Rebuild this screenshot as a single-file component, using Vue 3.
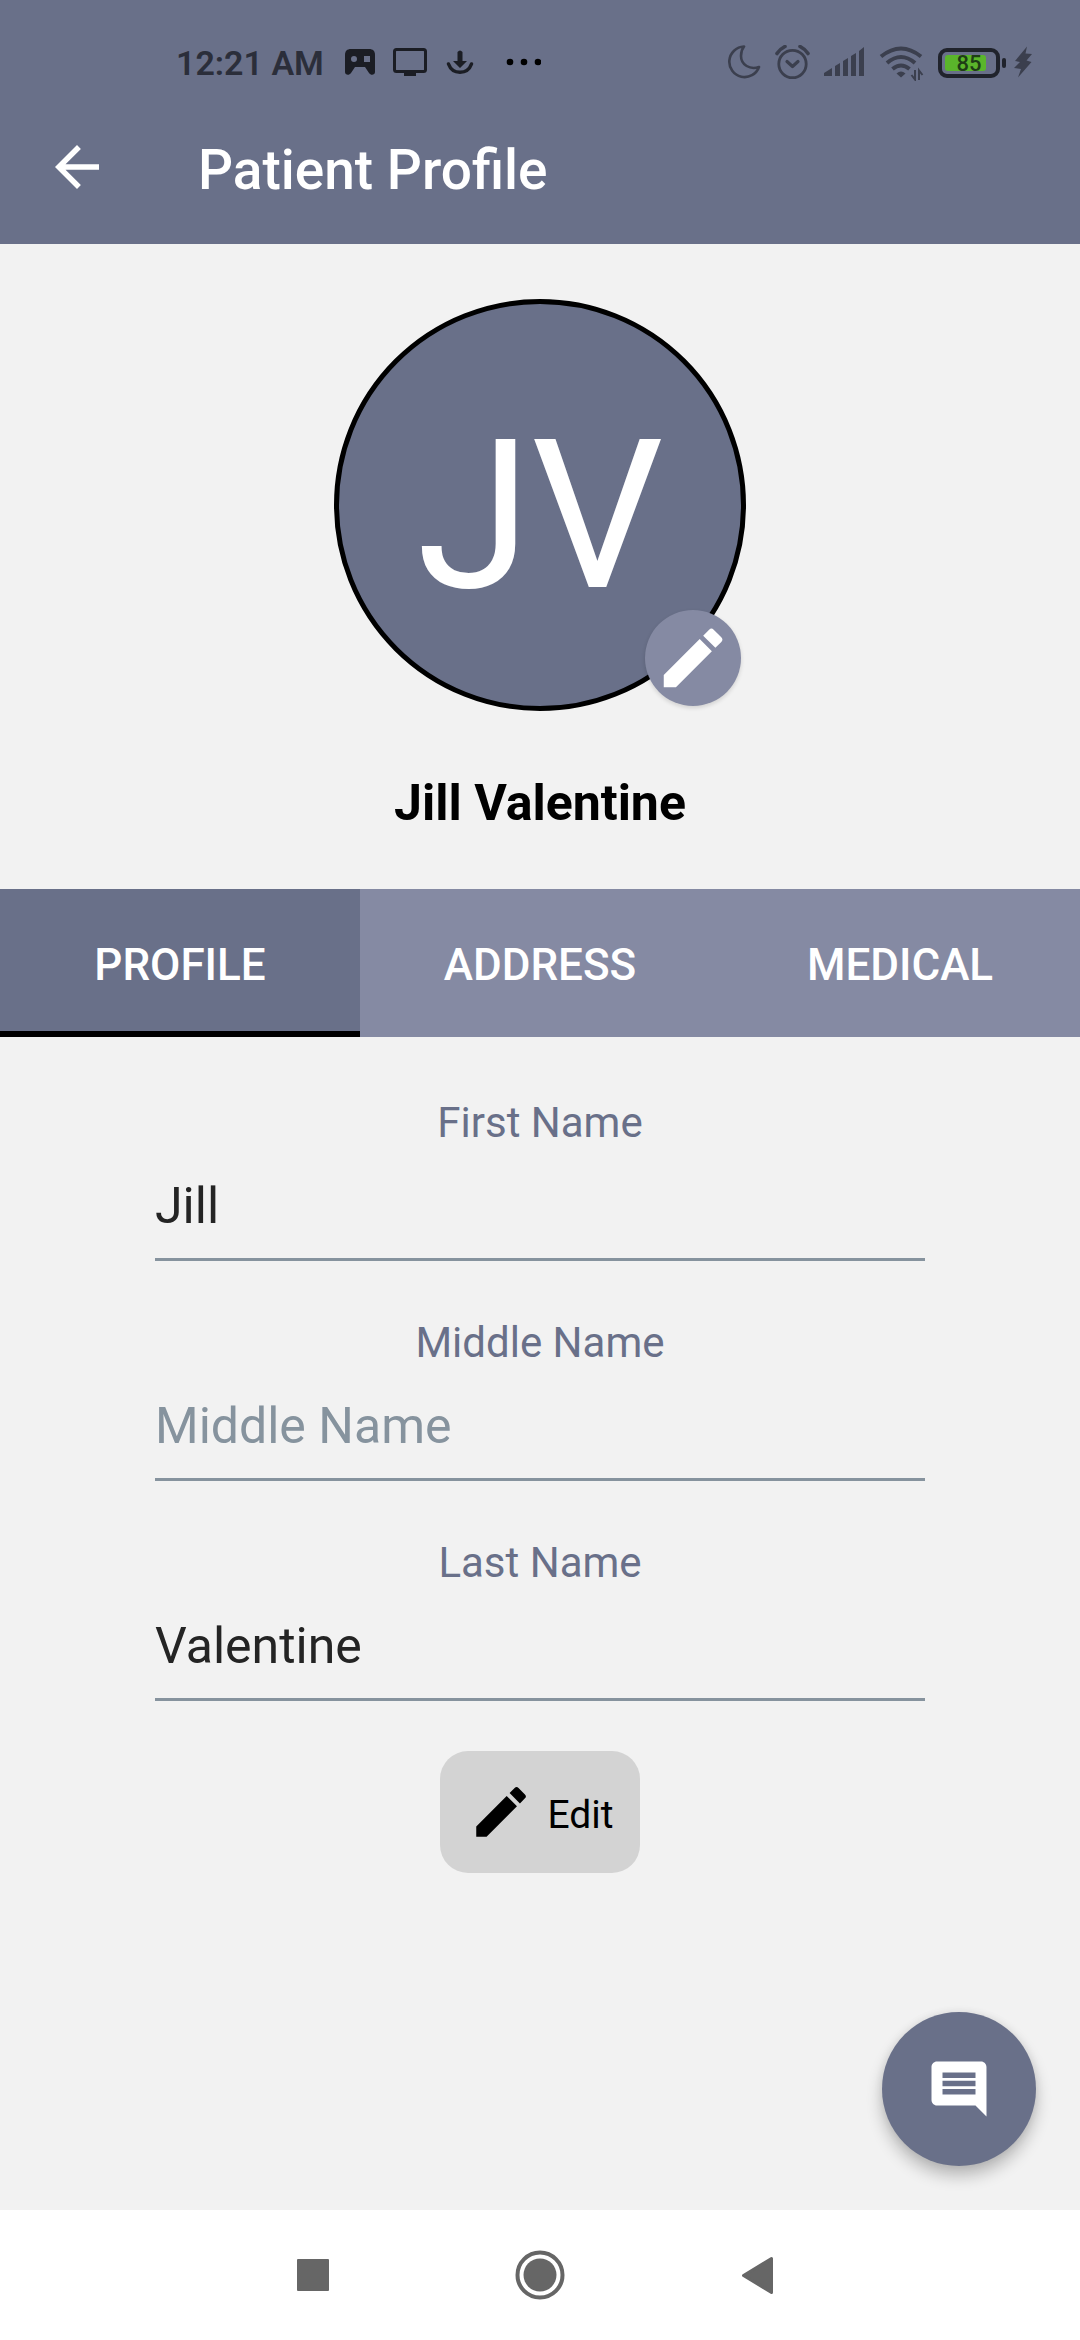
<script setup>
import { ref } from 'vue'

const tabs = ['Profile', 'Address', 'Medical']
const activeTab = ref('Profile')
const battery = 85

const fields = ref([
  { id: 'first-name', label: 'First Name', value: 'Jill' },
  { id: 'middle-name', label: 'Middle Name', value: '' },
  { id: 'last-name', label: 'Last Name', value: 'Valentine' },
])
</script>

<template>
  <div class="screen">
    <header class="top">
      <div class="status">
        <div class="status-left">
          <span class="time">12:21 AM</span>
          <svg width="30" height="36" viewBox="0 0 30 36" fill="#1b1d24">
            <path fill-rule="evenodd" d="M6 4h18c4 0 6 2 6 6v17c0 3-4 4-6 1l-4-6H10l-4 6c-2 3-6 2-6-1V10c0-4 2-6 6-6zM9 11a3 3 0 1 0 0 6a3 3 0 0 0 0-6zM19 11v6h6v-6z" />
          </svg>
          <svg width="34" height="36" viewBox="0 0 34 36">
            <rect x="1.5" y="4.5" width="31" height="22" rx="2" fill="none" stroke="#1b1d24" stroke-width="3" />
            <path d="M11 27h12v4H11z" fill="#1b1d24" />
          </svg>
          <svg width="30" height="36" viewBox="0 0 30 36">
            <path d="M3.500 19c4 11 19 11 23 0" fill="none" stroke="#1b1d24" stroke-width="3.500" stroke-linecap="round" />
            <path d="M12.500 7q2.500-3 5 0v9H22l-7 7-7-7h4.500z" fill="#1b1d24" />
          </svg>
          <svg width="48" height="36" viewBox="0 0 48 36">
            <circle cx="17" cy="17" r="3.300" /><circle cx="31" cy="17" r="3.300" /><circle cx="45" cy="17" r="3.300" />
          </svg>
        </div>
        <div class="status-right">
          <svg width="33" height="36" viewBox="0 0 33 36" fill="none" stroke="#3b3f4e" stroke-width="2.600" stroke-linejoin="round">
            <path d="M16 1.500A15.300 15.300 0 1 0 31 22C22 25 13 20 13 11c0-4 1-7 3-9.500z" />
          </svg>
          <svg width="35" height="36" viewBox="0 0 35 36" fill="none" stroke="#3b3f4e" stroke-width="2.800">
            <circle cx="17.500" cy="19" r="13.700" />
            <path d="M12 16.500l5.500 5 5.500-5" stroke-width="3.200" stroke-linecap="round" stroke-linejoin="round" />
            <path d="M2 8.500Q5 4 10 1.500M33 8.500Q30 4 25 1.500" stroke-width="3.600" stroke-linecap="round" />
          </svg>
          <svg width="40" height="36" viewBox="0 0 40 36" fill="#3b3f4e">
            <path d="M0 31v-3l8-5v8zM11 21l5-3v13h-5zM19 16l5-3v18h-5zM27 11l5-3v23h-5zM35 6l5-4v29h-5z" />
          </svg>
          <svg width="46" height="36" viewBox="0 0 46 36" fill="none" stroke="#3b3f4e" stroke-width="4">
            <path d="M3 11.500Q23-4.500 43 11.500M9 18Q23 6 37 18M14.500 24Q23 17 31.500 24" />
            <path d="M18.500 28.500Q23 24.500 27.500 28.500L23 32.500z" fill="#3b3f4e" stroke="none" />
            <path d="M37 25v9.500l-3.500-4.500M41 35v-9.500l3.500 4.500" stroke-width="2" />
          </svg>
          <div class="power">
            <div class="battery">
              <div class="track">
                <div class="level" :style="{ width: battery + '%' }"></div>
                <span class="percent">{{ battery }}</span>
              </div>
            </div>
            <div class="nub"></div>
            <svg class="bolt" width="18" height="36" viewBox="0 0 18 36" fill="#3b3f4e">
              <path d="M13 1.500L1 16l5 1-6 6 7 1-3 8.500L17.500 17l-5-1.500L18 9l-6.500-.5z" />
            </svg>
          </div>
        </div>
      </div>
      <div class="app-bar">
        <button class="back" type="button" aria-label="Back">
          <svg width="66" height="66" viewBox="0 0 24 24" fill="#fff">
            <path d="M20 11H7.830l5.590-5.590L12 4l-8 8 8 8 1.410-1.410L7.830 13H20z" />
          </svg>
        </button>
        <h1>Patient Profile</h1>
      </div>
    </header>

    <main>
      <section class="hero">
        <div class="avatar">
          <span>JV</span>
          <button class="badge" type="button" aria-label="Change picture">
            <svg width="78" height="78" viewBox="0 0 24 24" fill="#fff">
              <path d="M3 17.250V21h3.750L17.810 9.940l-3.750-3.750zM20.710 7.040a1 1 0 0 0 0-1.410l-2.340-2.340a1 1 0 0 0-1.410 0l-1.830 1.830 3.750 3.750z" />
            </svg>
          </button>
        </div>
        <h2>Jill Valentine</h2>
      </section>

      <nav class="tabs">
        <button
          v-for="tab in tabs"
          :key="tab"
          type="button"
          :class="{ active: tab === activeTab }"
          @click="activeTab = tab"
        >{{ tab }}</button>
      </nav>

      <form class="form" @submit.prevent>
        <div v-for="field in fields" :key="field.id" class="field">
          <label :for="field.id">{{ field.label }}</label>
          <input :id="field.id" v-model="field.value" type="text" :placeholder="field.label" />
        </div>
        <button class="edit" type="submit">
          <svg width="66" height="66" viewBox="0 0 24 24">
            <path d="M3 17.250V21h3.750L17.810 9.940l-3.750-3.750zM20.710 7.040a1 1 0 0 0 0-1.410l-2.340-2.340a1 1 0 0 0-1.410 0l-1.830 1.830 3.750 3.750z" />
          </svg>
          <span>Edit</span>
        </button>
      </form>

      <button class="fab" type="button" aria-label="Messages">
        <svg width="66" height="66" viewBox="0 0 24 24" fill="#fff">
          <path d="M21.990 4c0-1.100-.890-2-1.990-2H4c-1.100 0-2 .9-2 2v12c0 1.100.9 2 2 2h14l4 4zM18 14H6v-2h12zm0-3H6V9h12zm0-3H6V6h12z" />
        </svg>
      </button>
    </main>

    <footer class="system-nav">
      <button type="button" aria-label="Recent apps">
        <svg width="50" height="50" viewBox="0 0 50 50" fill="#666"><rect x="8" y="9" width="32" height="32" rx="1" /></svg>
      </button>
      <button type="button" aria-label="Home">
        <svg width="50" height="50" viewBox="0 0 50 50">
          <circle cx="25" cy="25" r="22.500" fill="none" stroke="#666" stroke-width="4" />
          <circle cx="25" cy="25" r="16.500" fill="#666" />
        </svg>
      </button>
      <button type="button" aria-label="Back">
        <svg width="50" height="50" viewBox="0 0 50 50" fill="#666" stroke="#666" stroke-width="3" stroke-linejoin="round">
          <path d="M2.500 25.500L30.500 8.500v34z" />
        </svg>
      </button>
    </footer>
  </div>
</template>

<style>
body {
  margin: 0;
}
</style>

<style scoped>
.screen {
  display: flex;
  flex-direction: column;
  min-height: 100vh;
  background: #f2f2f2;
  font-family: Roboto, sans-serif;
}

button {
  display: flex;
  align-items: center;
  justify-content: center;
  margin: 0;
  padding: 0;
  border: 0;
  background: none;
  font-family: inherit;
}

svg {
  display: block;
  flex: none;
}

.top {
  background: #697089;
}

.status {
  display: flex;
  justify-content: space-between;
  align-items: center;
  height: 54px;
  padding: 36px 48px 0 176px;
}

.status-left,
.status-right,
.power {
  display: flex;
  align-items: center;
}

.status-left {
  gap: 18px;
}

.status-right {
  gap: 14px;
}

.time {
  min-width: 151px;
  color: #2b2e3a;
  font-size: 34px;
  font-weight: 600;
  line-height: 40px;
}

.battery {
  box-sizing: border-box;
  width: 62px;
  height: 30px;
  padding: 3px;
  border: 4px solid #20232c;
  border-radius: 9px;
}

.track {
  position: relative;
  height: 16px;
}

.level {
  height: 16px;
  border-radius: 3px;
  background: #5ab52b;
}

.percent {
  position: absolute;
  inset: 0;
  color: #1e3d16;
  font-size: 22px;
  font-weight: 500;
  line-height: 18px;
  text-align: center;
}

.nub {
  width: 4px;
  height: 10px;
  margin-left: 2px;
  border-radius: 2px;
  background: #20232c;
}

.bolt {
  margin-left: 8px;
}

.app-bar {
  display: flex;
  align-items: center;
  gap: 88px;
  height: 154px;
  padding: 0 44px;
}

h1 {
  margin: 0;
  padding-top: 6px;
  color: #fff;
  font-size: 55px;
  font-weight: 500;
  line-height: 66px;
}

main {
  position: relative;
  flex: 1;
}

.hero {
  display: flex;
  flex-direction: column;
  align-items: center;
  gap: 62px;
  padding: 55px 0 56px;
}

.avatar {
  position: relative;
  display: flex;
  align-items: center;
  justify-content: center;
  box-sizing: border-box;
  width: 412px;
  height: 412px;
  padding-top: 22px;
  border: 5px solid #000;
  border-radius: 50%;
  background: #697089;
  color: #fff;
  font-size: 208px;
  line-height: 244px;
}

.badge {
  position: absolute;
  right: 0;
  bottom: 0;
  width: 96px;
  height: 96px;
  border-radius: 50%;
  background: #858aa3;
  box-shadow: 0 2px 4px rgba(0, 0, 0, 0.14);
}

h2 {
  margin: 0;
  color: #000;
  font-size: 50px;
  font-weight: 700;
  line-height: 60px;
}

.tabs {
  display: grid;
  grid-template-columns: repeat(3, 1fr);
  background: #858aa3;
}

.tabs button {
  height: 148px;
  padding-top: 4px;
  border-bottom: 0 solid #000;
  color: #fff;
  font-size: 44px;
  font-weight: 500;
  text-transform: uppercase;
}

.tabs .active {
  padding-top: 10px;
  border-bottom-width: 6px;
  background: #697089;
}

.form {
  display: flex;
  flex-direction: column;
  gap: 57px;
  padding: 61px 155px;
}

.field {
  display: flex;
  flex-direction: column;
  gap: 6px;
}

label {
  color: #697089;
  font-size: 42px;
  line-height: 50px;
  text-align: center;
}

input {
  box-sizing: border-box;
  width: 100%;
  height: 107px;
  padding: 0;
  border: 0;
  border-bottom: 3px solid #86939e;
  border-radius: 0;
  outline: 0;
  background: none;
  color: #242424;
  font-family: inherit;
  font-size: 50px;
}

input::placeholder {
  color: #86939e;
  opacity: 1;
}

.edit {
  align-self: center;
  gap: 13px;
  margin-top: -7px;
  padding: 28px 26px 28px 28px;
  border-radius: 28px;
  background: #d3d3d3;
  color: #000;
  font-size: 39px;
}

.edit span {
  padding-top: 6px;
}

.fab {
  position: absolute;
  right: 44px;
  bottom: 44px;
  width: 154px;
  height: 154px;
  border-radius: 50%;
  background: #697089;
  box-shadow: 0 10px 16px rgba(0, 0, 0, 0.24), 0 0 8px rgba(0, 0, 0, 0.08);
}

.system-nav {
  display: flex;
  align-items: center;
  justify-content: center;
  gap: 176px;
  height: 130px;
  background: #fff;
}
</style>
